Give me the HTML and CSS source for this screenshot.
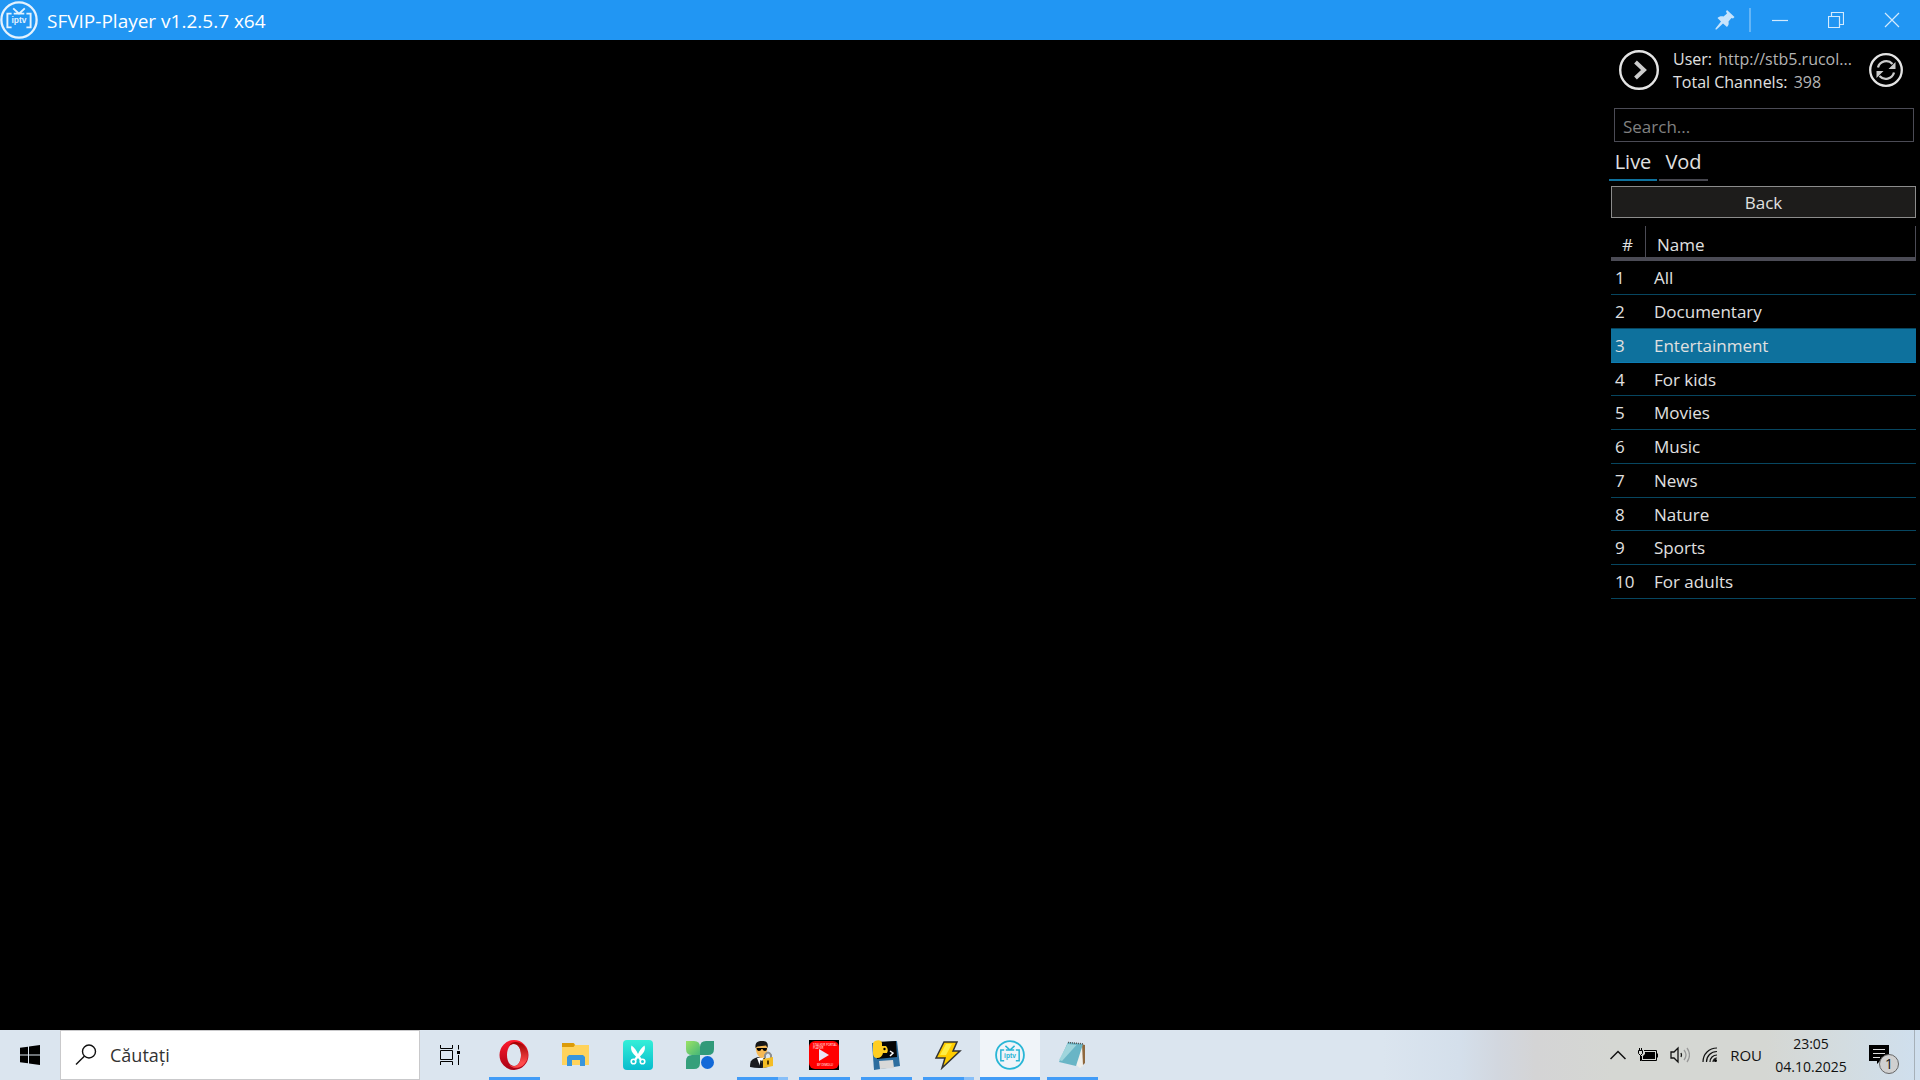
FILE: index.html
```html
<!DOCTYPE html>
<html lang="ro">
<head>
<meta charset="utf-8">
<title>SFVIP-Player</title>
<link rel="stylesheet" href="styles.css">
</head>
<body>
<svg class="defs" aria-hidden="true">
  <symbol id="iptv" viewBox="0 0 36 36">
    <circle cx="18" cy="18" r="16.7" fill="none" stroke="currentColor" stroke-width="2.2"/>
    <path d="M12.500 7l5.500 5 5.500-5M11 12H7v13h4M25 12h4v13h-4M13 12h10" fill="none" stroke="currentColor" stroke-width="1.800"/>
    <text x="18" y="21" text-anchor="middle" class="iptv-text">iptv</text>
  </symbol>
</svg>
<div class="screen">
  <header class="titlebar">
    <svg class="app-logo"><use href="#iptv"/></svg>
    <h1 class="app-title">SFVIP-Player v1.2.5.7 x64</h1>
    <button class="pin" aria-label="Pin"><svg width="20" height="20" viewBox="0 0 20 20"><path d="M12 0l7.500 7-1.500 1.500-1.500-.5-3 3.500c.5 2.500 0 4-1.500 5.500L8 13.500 1.500 19.500.5 19.500.5 18.500 6 11.500 2.500 8C4 6.500 6 6 8.500 6.500L12 3.500 11 1.500z" fill="#c8e4fc"/></svg></button>
    <span class="divider"></span>
    <button class="window-button" aria-label="Minimize"><svg width="16" height="16" viewBox="0 0 16 16"><path d="M0 8.500h16"/></svg></button>
    <button class="window-button" aria-label="Restore"><svg width="16" height="16" viewBox="0 0 16 16"><path d="M.5 4.500h11v11H.5zM3.500 4V.5h12v12H12"/></svg></button>
    <button class="window-button" aria-label="Close"><svg width="16" height="16" viewBox="0 0 16 16"><path d="M1 1l14 14M15 1L1 15"/></svg></button>
  </header>
  <main class="main">
    <section class="video" aria-label="Video"></section>
    <aside class="panel">
      <div class="account">
        <button class="round" aria-label="Hide panel"><svg width="40" height="40" viewBox="0 0 40 40"><circle cx="20" cy="20" r="18.800" fill="none" stroke="#e4e4e4" stroke-width="2.400"/><path d="M16.500 12l8.500 8-8.500 8" fill="none" stroke="#ccc" stroke-width="4"/></svg></button>
        <div class="account-text">
          <p>User: <span class="value">http://stb5.rucol...</span></p>
          <p>Total Channels: <span class="value">398</span></p>
        </div>
        <button class="round" aria-label="Refresh"><svg width="34" height="34" viewBox="0 0 34 34"><circle cx="17" cy="17" r="15.800" fill="none" stroke="#e4e4e4" stroke-width="2.300"/><path d="M9 14.500a8.500 8.500 0 0 1 14.500-3.500M25 19.500a8.500 8.500 0 0 1-14.500 3.500" fill="none" stroke="#ccc" stroke-width="2.300"/><path d="M26.500 9v7h-7zM7.500 25v-7h7z" fill="#ccc"/></svg></button>
      </div>
      <input class="search" type="text" placeholder="Search..." aria-label="Search channels">
      <div class="tabs" role="tablist">
        <button class="tab tab-active" role="tab" aria-selected="true">Live</button>
        <button class="tab" role="tab" aria-selected="false">Vod</button>
      </div>
      <button class="back">Back</button>
      <table class="categories">
        <thead><tr><th class="number" scope="col">#</th><th scope="col">Name</th></tr></thead>
        <tbody>
          <tr><td>1</td><td>All</td></tr>
          <tr><td>2</td><td>Documentary</td></tr>
          <tr class="selected"><td>3</td><td>Entertainment</td></tr>
          <tr><td>4</td><td>For kids</td></tr>
          <tr><td>5</td><td>Movies</td></tr>
          <tr><td>6</td><td>Music</td></tr>
          <tr><td>7</td><td>News</td></tr>
          <tr><td>8</td><td>Nature</td></tr>
          <tr><td>9</td><td>Sports</td></tr>
          <tr><td>10</td><td>For adults</td></tr>
        </tbody>
      </table>
    </aside>
  </main>
  <footer class="taskbar">
    <button class="start" aria-label="Start"><svg width="20" height="20" viewBox="0 0 20 20"><path d="M0 2.800l8-1.100v7.800H0zM9 1.500L20 0v9.500H9zM0 10.500h8v7.800l-8-1.100zM9 10.500h11V20L9 18.500z"/></svg></button>
    <label class="taskbar-search">
      <svg width="22" height="22" viewBox="0 0 22 22"><circle cx="14" cy="7.500" r="6.500" fill="none" stroke="#111" stroke-width="1.400"/><path d="M9.300 12.200L1 20.500" stroke="#111" stroke-width="1.400"/></svg>
      <input type="text" placeholder="Căutați" aria-label="Căutați">
    </label>
    <nav class="apps">
      <button class="app task-view" aria-label="Task view"><svg width="20" height="20" viewBox="0 0 20 20" fill="none" stroke="#000"><path d="M.5 0v3.500h12V0M.5 20v-3.500h12V20M.5 5.500h12v9H.5zM18.500 0v4.500M18.500 10v10"/><path d="M17 6h3v3h-3z" fill="#000" stroke="none"/></svg></button>
      <button class="app running" aria-label="Opera"><svg width="30" height="30" viewBox="0 0 30 30"><defs><linearGradient id="op1" x2="0" y2="1"><stop stop-color="#ff1b2d"/><stop offset="1" stop-color="#a70014"/></linearGradient><linearGradient id="op2" x2="0" y2="1"><stop stop-color="#9c0000"/><stop offset=".8" stop-color="#ff4b4b"/></linearGradient></defs><path d="M15 0a14.500 15 0 1 0 0 30a14.500 15 0 1 0 0-30zM15 4c4.500 0 7 5 7 11s-2.500 11-7 11-7-5-7-11 2.500-11 7-11z" fill="url(#op1)" fill-rule="evenodd"/><path d="M10 5.500C13 1 19 1 24 4.500c6.500 6 6.500 15 0 21-5 3.500-11 3-14-1 7 5 12-1 12-9.500S17 1 10 5.500z" fill="url(#op2)"/></svg></button>
      <button class="app" aria-label="File Explorer"><svg width="30" height="30" viewBox="0 0 30 30"><path d="M1 3h12l1.500 2H28v20H1z" fill="#ffd35c"/><path d="M1 3h11.500l1.500 2-1.500 2H1z" fill="#dc9b08"/><path d="M6 26V17l2-2h14l2 2v9h-5v-6h-8v6z" fill="#3895dc"/></svg></button>
      <button class="app" aria-label="CapCut"><svg width="30" height="30" viewBox="0 0 30 30"><defs><linearGradient id="cc" x2="0" y2="1"><stop stop-color="#34efd8"/><stop offset="1" stop-color="#08bccd"/></linearGradient></defs><rect width="30" height="30" rx="4" fill="url(#cc)"/><path d="M8.500 5.500c3 2 5 5 6.500 8.500 1.500-3.500 3.500-6.500 6.500-8.500 1.500 4-1 8-4.500 11l2 3-2 1-2-2.500-2 2.500-2-1 2-3C9.500 13.500 7 9.500 8.500 5.500z" fill="#fff"/><circle cx="10.500" cy="21.500" r="2.300" fill="none" stroke="#fff" stroke-width="1.600"/><circle cx="19.500" cy="21.500" r="2.300" fill="none" stroke="#fff" stroke-width="1.600"/></svg></button>
      <button class="app" aria-label="Clover"><svg width="28" height="28" viewBox="0 0 28 28"><defs><linearGradient id="cl" x2="1" y2="1"><stop stop-color="#9be264"/><stop offset="1" stop-color="#45b779"/></linearGradient></defs><path d="M0 0h8q6 0 6 6v8H6q-6 0-6-6z" fill="url(#cl)"/><path d="M28 0h-8q-6 0-6 6v8h8q6 0 6-6z" fill="#319a79"/><path d="M0 28h8q6 0 6-6v-8H6q-6 0-6 6z" fill="#359f7b"/><circle cx="21.500" cy="21.500" r="6.500" fill="#1269d8"/></svg></button>
      <button class="app running grouped" aria-label="Agent"><svg width="30" height="30" viewBox="0 0 30 30"><path d="M3 27c0-7 2-8 8-10l7 1 3 9q-9 2-18 0z" fill="#1b1b1e"/><path d="M10 18l3 8 4-9z" fill="#fff"/><path d="M13.500 20l-1 6 1.500 1 1-6z" fill="#111"/><path d="M9 5h11c1 7-1 12-5 13-4-1-7-6-6-13z" fill="#f6b955"/><path d="M8.500 8C8 3 10 1 15 1s6.500 2 5.500 7L19 5.500l-8.500 1z" fill="#171717"/><path d="M9.500 8h10.500q0 3-2 3t-2.500-2h-1q-.5 2-2.500 2t-2.500-3z"/><path d="M18 18v-3q3-5 6 0v3" fill="none" stroke="#8d8f91" stroke-width="2"/><path d="M16 19l10-2v9l-10 2z" fill="#f4bd25"/><path d="M21 20.500v4" stroke="#513800" stroke-width="2"/></svg></button>
      <button class="app running" aria-label="Stalker Portal Player"><svg width="30" height="30" viewBox="0 0 30 30"><path d="M0 0h30v30H0z"/><rect y="1" width="30" height="28" rx="6" fill="#f00"/><path d="M10 9v12l10-6z" fill="#e9e4f5"/><text x="4" y="6" class="tiny">STALKER PORTAL</text><text x="4" y="9" class="tiny">PLAYER</text><text x="8" y="26" class="tiny">BY DIMOLU</text></svg></button>
      <button class="app running" aria-label="Python"><svg width="30" height="30" viewBox="0 0 30 30"><path d="M1 3l25-2 3 25-26 4z" fill="#2c6d9f"/><path d="M5 2l20-1 1 16-20 2z" fill="#050505"/><path d="M8 21l14-1 1 8-14 1z" fill="#d8d8d8"/><path d="M4 1q6-2 7 2v3h4q3 3 1 7h-4q-1 5-6 5-4 0-4-5V4q0-2 2-3z" fill="#ffce22"/><circle cx="13.500" cy="9" r="1.200"/><path d="M19 11l3 2-3 3" fill="none" stroke="#fff" stroke-width="1.500"/></svg></button>
      <button class="app running grouped" aria-label="Lightning"><svg width="28" height="30" viewBox="0 0 28 30"><path d="M10 2h13l-4 9h7L8 28l3-10H2z" fill="#fc0" stroke="#333" stroke-width="1.500"/><path d="M12 4h6l-6 11H6z" fill="#ffed43"/></svg></button>
      <button class="app running current" aria-label="SFVIP-Player"><svg width="30" height="30"><use href="#iptv"/></svg></button>
      <button class="app running" aria-label="Notepad"><svg width="30" height="30" viewBox="0 0 30 30"><path d="M24 4l4 1v18l-4 4z" fill="#8f683e"/><path d="M25 4l1 22-3 2-5-4z" fill="#f0f0ec"/><path d="M11 2l15 2-7 22-17-4z" fill="#69b5c6"/><path d="M10.500 4l9 1L5 21l-3-1z" fill="#9fd5dc"/><path d="M11 2.500l16 1.500" stroke="#555" stroke-width="1.500" stroke-dasharray="1 1"/></svg></button>
    </nav>
    <div class="tray">
      <button aria-label="Show hidden icons"><svg width="16" height="10" viewBox="0 0 16 10"><path d="M.5 9L8 1.500 15.500 9" fill="none" stroke="#111" stroke-width="1.500"/></svg></button>
      <button aria-label="Battery"><svg width="20" height="14" viewBox="0 0 20 14"><path d="M6 2.500h12.500v10H3.500V8M19.500 5.500v4" fill="none" stroke="#000"/><path d="M7 4h10v7H5V8l2-2z"/><path d="M.5 2.500h4v3l-2 2-2-2zM1.500 0v3M3.500 0v3M2.500 7v6" fill="none" stroke="#000"/></svg></button>
      <button aria-label="Volume"><svg width="20" height="18" viewBox="0 0 20 18" fill="none" stroke="#111" stroke-width="1.300"><path d="M1 6h3l4-4v14l-4-4H1z"/><path d="M11 7q1 2 0 4"/><path d="M14 4q4 5 0 10M17 2q5 7 0 14" stroke="#999"/></svg></button>
      <button aria-label="Network"><svg width="16" height="16" viewBox="0 0 16 16" fill="none" stroke="#111" stroke-width="1.200"><path d="M1 15C1 7 7 1 15 1M4.500 15C4.500 9 9 4.500 15 4.500M8 15c0-4 3-7 7-7M11 15c0-2 2-4 4-4"/><circle cx="13.500" cy="13.500" r="1.500" fill="#000" stroke="none"/></svg></button>
      <button class="language">ROU</button>
      <button class="clock"><time>23:05</time><span>04.10.2025</span></button>
      <button class="notifications" aria-label="1 notification"><svg width="20" height="20" viewBox="0 0 20 20"><path d="M0 0h20v16h-9l-3 3v-3H0z"/><path d="M4 4.500h12M4 8.500h12M4 12.500h7" stroke="#ddd"/></svg><span class="badge">1</span></button>
    </div>
  </footer>
</div>
</body>
</html>
```
FILE: styles.css
```css
* { box-sizing: border-box; }
body {
  margin: 0;
  background: #000;
  color: #e0e0e0;
  font: 17px/22px "Open Sans", "Noto Sans", sans-serif;
}
p, h1 { margin: 0; font-weight: 400; }
button, input { font: inherit; color: inherit; margin: 0; padding: 0; border: 0; background: none; }
svg { display: block; flex: none; }
.defs { position: absolute; width: 0; height: 0; }
.screen { display: flex; flex-direction: column; min-height: 100vh; }

.titlebar { display: flex; align-items: center; height: 40px; background: #2196f3; color: #fff; }
.app-logo { width: 38px; height: 38px; color: #e4f2fe; }
.iptv-text { font: 700 8px/8px "Liberation Sans", sans-serif; fill: currentColor; }
.app-title { flex: 1; padding: 2px 0 0 9px; font-size: 19px; line-height: 24px; }
.pin { display: grid; place-items: center; width: 48px; height: 40px; }
.divider { width: 2px; height: 24px; margin-right: 1px; background: #64b5f6; }
.window-button { display: grid; place-items: center; width: 56px; height: 40px; }
.window-button path { fill: none; stroke: #d3eafd; stroke-width: 1.2; }

.main { display: flex; flex: 1; }
.video { flex: 1; }
.panel { display: flex; flex-direction: column; width: 311px; padding: 8px 4px 0 2px; }
.account { display: flex; align-items: center; gap: 14px; height: 44px; padding: 0 13px 0 8px; }
.account-text { flex: 1; padding-top: 1px; font-size: 16px; line-height: 23px; white-space: nowrap; }
.value { margin-left: 2px; color: #b4b4b4; }
.search { height: 34px; margin: 16px 2px 0 3px; padding: 2px 8px 0; border: 1px solid #4b4b55; }
.search::placeholder { color: #808080; opacity: 1; }
.tabs { display: flex; gap: 2px; height: 39px; margin-left: -2px; }
.tab { width: 49px; padding-top: 3px; border-bottom: 2px solid #46464e; font-size: 20px; }
.tab-active { width: 48px; border-color: #0e719d; }
.back { height: 32px; margin-top: 5px; padding-top: 2px; border: 1px solid #8c8c8c; background: #1d1c1b; }

.categories { width: 100%; margin-top: 8px; border-collapse: separate; border-spacing: 0; table-layout: fixed; }
.categories th { height: 35px; padding: 6px 0 0 11px; border-right: 1px solid #4b4b55; border-bottom: 4px solid #4b4b55; font-weight: 400; text-align: left; }
.categories .number { width: 35px; }
.categories td { height: 34px; padding: 1px 0 0 4px; border-bottom: 1px solid #074660; }
.categories td + td { padding-left: 8px; }
.categories tr:nth-child(4n) td { height: 33px; }
.categories .selected td { background: #0e719d; border-color: #0c7cb4; }

.taskbar {
  display: flex;
  height: 50px;
  color: #111;
  background: linear-gradient(90deg, #dbe5ef 0 72%, #d4dfeb 76%, #d2d7df 78%, #d4d4d5 80%, #d5d7d3 84% 92%, #d3dce0 96%, #cfdfee);
}
.start { display: grid; place-items: center; width: 60px; }
.taskbar-search { display: flex; align-items: center; gap: 13px; width: 360px; padding-left: 14px; border: 1px solid #c9c9cb; background: #fff; }
.taskbar-search input { flex: 1; min-width: 0; font-size: 18px; }
.taskbar-search input::placeholder { color: #333; opacity: 1; }
.apps { display: flex; flex: 1; gap: 2px; }
.app { position: relative; display: grid; place-items: center; width: 60px; }
.task-view { margin-right: 2px; }
.running::after { content: ""; position: absolute; left: 5px; right: 4px; bottom: 0; height: 3px; background: #429cf7; }
.grouped::after { background: linear-gradient(90deg, #429cf7 80%, #88bff8 80%); }
.current { background: #f0f4f9; color: #29b6d6; }
.current::after { left: 0; right: 0; }
.tiny { font: 3px "Open Sans", sans-serif; fill: #fff; }

.tray { display: flex; align-items: center; gap: 12px; padding-right: 5px; }
.language { font-size: 15px; }
.clock { display: flex; flex-direction: column; align-items: center; width: 74px; font-size: 14px; line-height: 23px; }
.notifications { position: relative; display: flex; align-items: center; width: 46px; height: 50px; margin-left: 9px; border-right: 1px solid #a6b0b8; }
.badge { position: absolute; left: 10px; top: 24px; width: 20px; height: 20px; border: 1px solid #666; border-radius: 50%; background: #d0d0d0; font-size: 14px; line-height: 18px; }
```
